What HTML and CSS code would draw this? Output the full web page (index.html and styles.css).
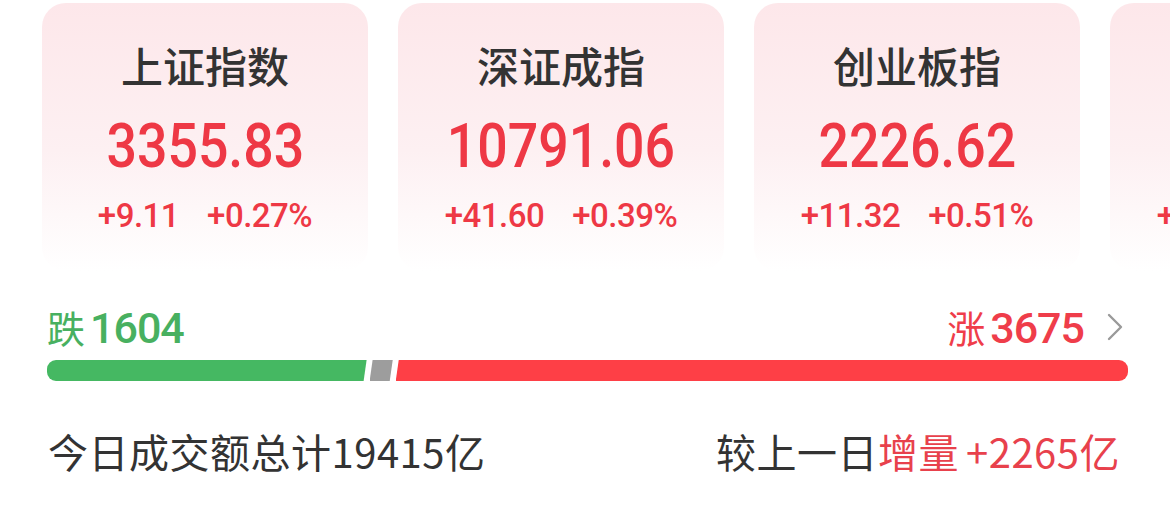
FILE: index.html
```
<!DOCTYPE html>
<html lang="zh-CN">
<head>
<meta charset="utf-8">
<link rel="stylesheet" href="styles.css">
</head>
<body>
<div class="page">
  <div class="cards">
    <div class="card">
      <div class="card-title">上证指数</div>
      <div class="card-value"><span class="num">3355.83</span></div>
      <div class="card-change"><span>+9.11</span><span>+0.27%</span></div>
    </div>
    <div class="card">
      <div class="card-title">深证成指</div>
      <div class="card-value"><span class="num">10791.06</span></div>
      <div class="card-change"><span>+41.60</span><span>+0.39%</span></div>
    </div>
    <div class="card">
      <div class="card-title">创业板指</div>
      <div class="card-value"><span class="num">2226.62</span></div>
      <div class="card-change"><span>+11.32</span><span>+0.51%</span></div>
    </div>
    <div class="card">
      <div class="card-title">科创50</div>
      <div class="card-value"><span class="num">1012.45</span></div>
      <div class="card-change"><span>+10.25</span><span>+1.02%</span></div>
    </div>
  </div>

  <div class="breadth">
    <div class="breadth-labels">
      <div class="fall"><span class="lbl">跌</span><span class="cnt">1604</span></div>
      <div class="rise"><span class="lbl">涨</span><span class="cnt">3675</span>
        <svg class="chev" width="18" height="28" viewBox="0 0 18 28"><path d="M3 2 L15 14 L3 26" fill="none" stroke="#9a9a9a" stroke-width="2.4" stroke-linecap="round" stroke-linejoin="round"/></svg>
      </div>
    </div>
    <div class="bar">
      <div class="seg seg-down" style="flex-grow:1604"></div>
      <div class="seg seg-flat" style="flex-grow:116"></div>
      <div class="seg seg-up" style="flex-grow:3675"></div>
    </div>
  </div>

  <div class="turnover">
    <div class="t-left">今日成交额总计19415亿</div>
    <div class="t-right">较上一日<span class="red">增量<span class="amt">+2265亿</span></span></div>
  </div>
</div>
</body>
</html>
```

FILE: styles.css
```
html, body {
  margin: 0;
  padding: 0;
  background: #ffffff;
  overflow: hidden;
}

.page {
  width: 1170px;
  height: 514px;
  overflow: hidden;
  font-family: "Noto Sans CJK SC", "Noto Sans", sans-serif;
}

.cards {
  display: flex;
  gap: 30px;
  padding: 3px 0 0 42px;
  overflow: hidden;
}

.card {
  flex: 0 0 326px;
  height: 268px;
  border-radius: 24px;
  background: linear-gradient(180deg, #fde7ea 0%, #fdf0f2 55%, #ffffff 100%);
  text-align: center;
  padding-top: 41px;
  box-sizing: border-box;
}

.card-title {
  font-family: "Noto Sans CJK SC", sans-serif;
  font-size: 42px;
  line-height: 42px;
  font-weight: 500;
  color: #333333;
}

.card-value {
  margin-top: 29px;
  height: 62px;
  line-height: 62px;
  white-space: nowrap;
}

.num {
  display: inline-block;
  font-family: Roboto, "Liberation Sans", sans-serif;
  font-size: 62px;
  font-weight: 500;
  color: #ee3845;
  transform: scaleX(0.865);
}

.card-change {
  margin-top: 22px;
  display: flex;
  justify-content: center;
  gap: 28px;
  font-family: Roboto, "Liberation Sans", sans-serif;
  font-size: 33px;
  line-height: 33px;
  font-weight: 500;
  letter-spacing: -0.5px;
  color: #ee3845;
  white-space: nowrap;
}

.breadth {
  padding: 0 42px 0 47px;
  margin-top: 34px;
}

.breadth-labels {
  display: flex;
  justify-content: space-between;
  align-items: center;
  height: 44px;
}

.fall, .rise {
  display: flex;
  align-items: baseline;
  white-space: nowrap;
}

.fall { color: #48b060; }
.rise { color: #ef3d4a; padding-right: 4px; }

.lbl {
  font-family: "Noto Sans CJK SC", sans-serif;
  font-size: 38px;
  line-height: 44px;
}

.cnt {
  font-family: Roboto, "Liberation Sans", sans-serif;
  font-size: 43px;
  line-height: 44px;
  font-weight: 500;
  margin-left: 5px;
  letter-spacing: -1px;
}

.chev {
  margin-left: 22px;
  align-self: center;
}

.bar {
  display: flex;
  gap: 3px;
  height: 21px;
  margin-top: 11px;
  border-radius: 9px;
  overflow: hidden;
}

.seg { height: 100%; flex-basis: 0; }

.seg-down {
  background: #45b862;
  clip-path: polygon(0 0, 100% 0, calc(100% - 3px) 100%, 0 100%);
}

.seg-flat {
  background: #9d9d9d;
  clip-path: polygon(3px 0, 100% 0, calc(100% - 3px) 100%, 0 100%);
}

.seg-up {
  background: #fe3f46;
  clip-path: polygon(3px 0, 100% 0, 100% 100%, 0 100%);
}

.turnover {
  display: flex;
  justify-content: space-between;
  padding: 0 50px 0 48px;
  margin-top: 50px;
  font-family: "Noto Sans CJK SC", sans-serif;
  font-size: 40px;
  line-height: 40px;
  letter-spacing: 0.5px;
  color: #333333;
  white-space: nowrap;
}

.red { color: #e8414c; }

.amt { margin-left: 7px; }
```
